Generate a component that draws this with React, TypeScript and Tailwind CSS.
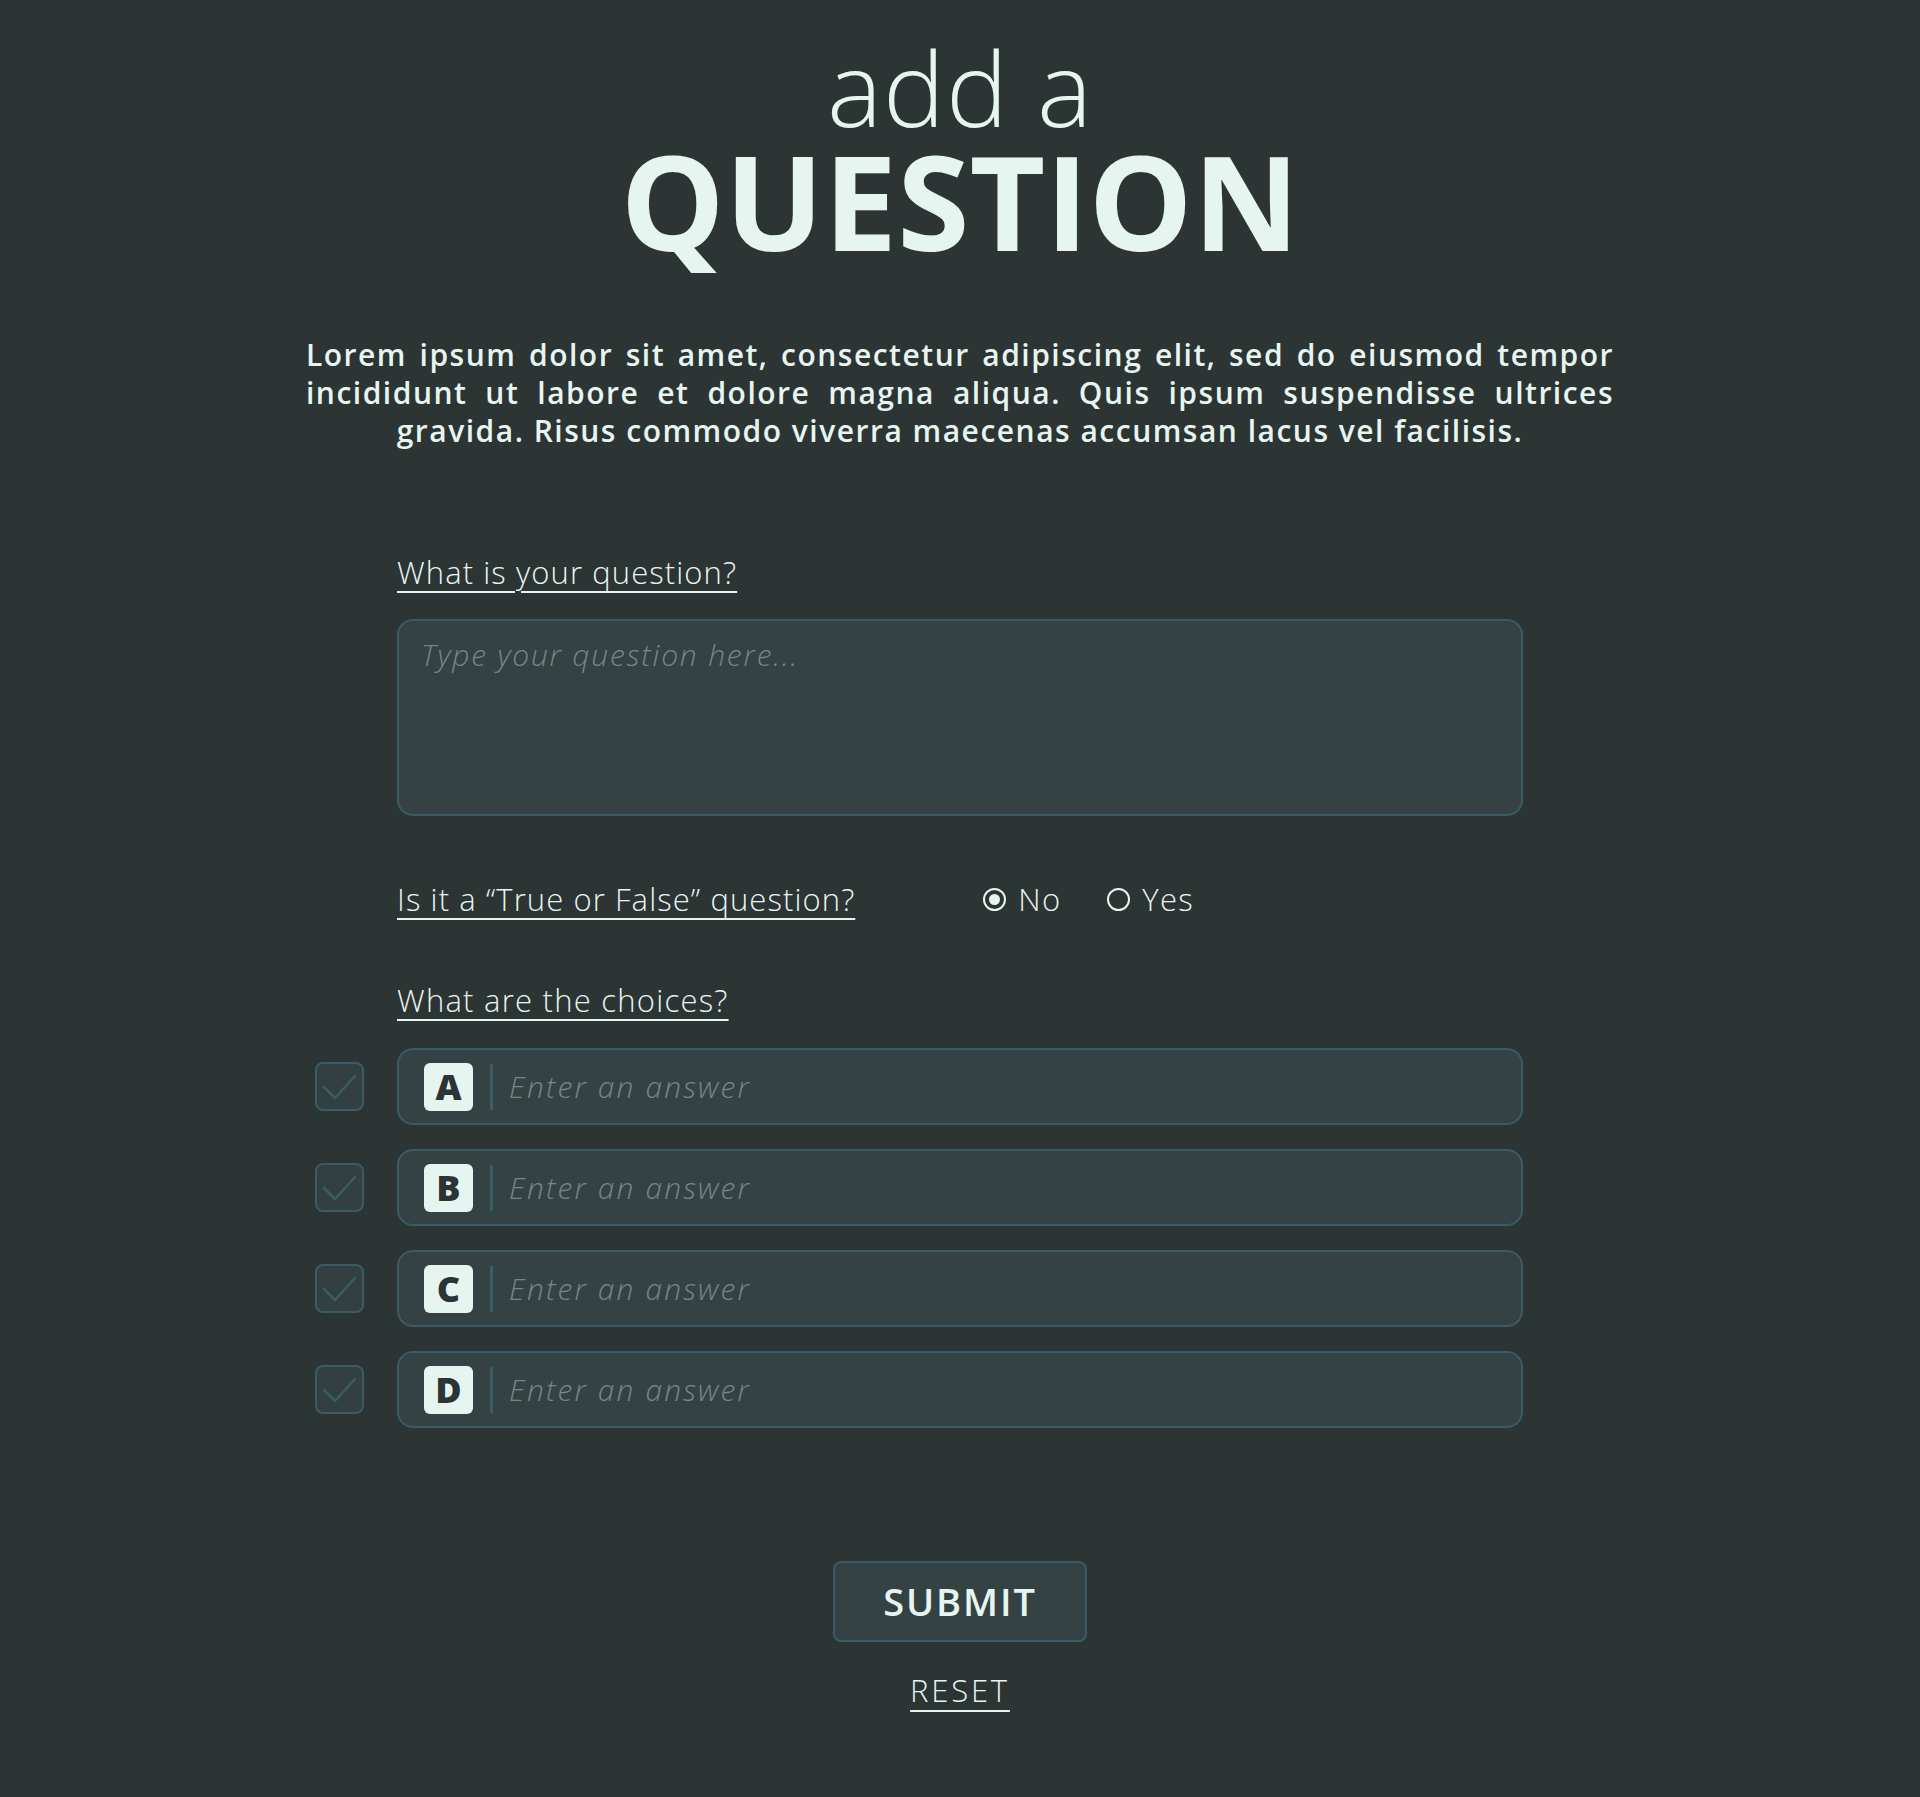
import { useState } from 'react'

const LETTERS = ['A', 'B', 'C', 'D']

function CheckBox() {
  return (
    <div className="flex h-[49px] w-[49px] shrink-0 items-center justify-center rounded-[8px] border-2 border-[#3a5c66] bg-[#334041]">
      <svg width="45" height="45" viewBox="0 0 45 45" fill="none">
        <path d="M7 23 L18 34 L38 12" stroke="#3a5c66" strokeWidth="2.5" strokeLinecap="round" strokeLinejoin="round" />
      </svg>
    </div>
  )
}

function Radio({ checked, label, onClick }: { checked: boolean; label: string; onClick: () => void }) {
  return (
    <button type="button" onClick={onClick} className="flex items-center gap-[12px]">
      <span className="flex h-[23px] w-[23px] items-center justify-center rounded-full border-[2.5px] border-[#e7f5f1]">
        {checked && <span className="h-[11px] w-[11px] rounded-full bg-[#e7f5f1]" />}
      </span>
      <span className="text-[31px] font-light leading-[40px] tracking-[0.04em]">{label}</span>
    </button>
  )
}

export default function App() {
  const [trueFalse, setTrueFalse] = useState(false)

  return (
    <div className="flex min-h-[1797px] flex-col items-center bg-[#2c3434] text-[#e7f5f1] font-['Open_Sans',sans-serif]">
      {/* Heading */}
      <h1 className="flex flex-col items-center pt-[35px]">
        <span className="text-[104px] font-light leading-none tracking-[0.01em]">add a</span>
        <span className="-mt-[4px] text-[131px] font-bold leading-none">QUESTION</span>
      </h1>

      <p className="mt-[70px] w-[1308px] text-justify text-[30px] font-semibold leading-[38px] tracking-[0.05em] [text-align-last:center]">
        Lorem ipsum dolor sit amet, consectetur adipiscing elit, sed do eiusmod tempor incididunt ut labore et dolore magna aliqua. Quis ipsum suspendisse ultrices gravida. Risus commodo viverra maecenas accumsan lacus vel facilisis.
      </p>

      <form className="mt-[102px] flex w-[1126px] flex-col">
        <label className="self-start text-[31px] font-light leading-[40px] tracking-[0.035em] underline decoration-2 underline-offset-[7px]">
          What is your question?
        </label>
        <textarea
          placeholder="Type your question here..."
          className="mt-[27px] h-[197px] resize-none rounded-[16px] border-2 border-[#3a5c66] bg-[#354243] px-[22px] py-[14px] text-[30px] font-light italic leading-[40px] tracking-[0.06em] outline-none placeholder:text-[#71888a]"
        />

        <div className="mt-[63px] flex items-center">
          <span className="text-[31px] font-light leading-[40px] tracking-[0.035em] underline decoration-2 underline-offset-[7px]">
            Is it a “True or False” question?
          </span>
          <div className="ml-[128px] flex items-center gap-[46px]">
            <Radio checked={!trueFalse} label="No" onClick={() => setTrueFalse(false)} />
            <Radio checked={trueFalse} label="Yes" onClick={() => setTrueFalse(true)} />
          </div>
        </div>

        <span className="mt-[61px] self-start text-[31px] font-light leading-[40px] tracking-[0.04em] underline decoration-2 underline-offset-[7px]">
          What are the choices?
        </span>

        <div className="ml-[-82px] mt-[28px] flex flex-col gap-[24px]">
          {LETTERS.map((letter) => (
            <div key={letter} className="flex items-center gap-[33px]">
              <CheckBox />
              <div className="flex h-[77px] flex-1 items-center rounded-[16px] border-2 border-[#3a5c66] bg-[#354243] pl-[25px]">
                <span className="flex h-[48px] w-[49px] items-center justify-center rounded-[6px] bg-[#e7f5f1] text-[36px] font-extrabold leading-none text-[#2c3434]">
                  {letter}
                </span>
                <span className="ml-[17px] h-[46px] w-[3px] bg-[#3a5c66]" />
                <input
                  placeholder="Enter an answer"
                  className="ml-[16px] flex-1 bg-transparent text-[30px] font-light italic tracking-[0.07em] outline-none placeholder:text-[#71888a]"
                />
              </div>
            </div>
          ))}
        </div>

        <button
          type="button"
          className="mt-[133px] flex h-[81px] w-[254px] items-center justify-center self-center rounded-[8px] border-2 border-[#3a5c66] bg-[#354243] text-[38px] font-semibold tracking-[0.05em]"
        >
          SUBMIT
        </button>
        <button
          type="reset"
          className="mt-[30px] self-center text-[31px] font-light leading-[36px] tracking-[0.09em] underline decoration-2 underline-offset-[8px]"
        >
          RESET
        </button>
      </form>
    </div>
  )
}
